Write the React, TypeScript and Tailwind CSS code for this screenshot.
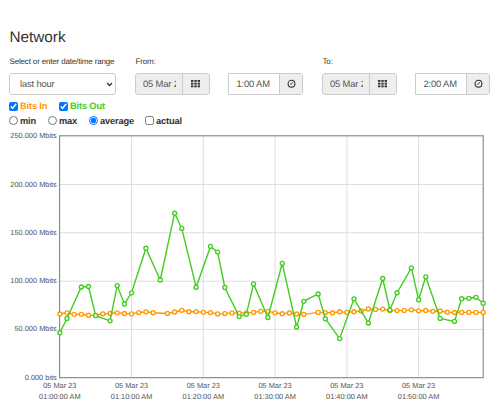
import { ReactNode } from "react"

type Point = [minute: number, y: number]

const bitsOut: Point[] = [
  [0, 332.7], [1, 318.5], [3, 287], [4, 286.5], [5, 315.6], [7, 320.8], [8, 285.6], [9, 304], [10, 292.8],
  [12, 248.2], [14, 280], [16, 213.2], [17, 228.4], [19, 287.2], [21, 246.4], [22, 252.1], [23, 287.5],
  [25, 316.6], [26, 314.3], [27, 283.9], [29, 317.5], [31, 263.3], [33, 327], [34, 301.3], [36, 294],
  [37, 318.7], [39, 338.6], [41, 298.8], [43, 323], [45, 278.5], [46, 310], [47, 292.7], [49, 267.8],
  [50, 299.7], [51, 276.8], [53, 318.4], [55, 321.4], [56, 298.7], [57, 298.3], [58, 297.3], [59, 303.2],
]

const bitsIn: Point[] = [
  [0, 314], [1, 312.8], [2, 314.3], [3, 314.3], [4, 315.2], [5, 315.5], [6, 313.8], [7, 313.5], [8, 312.8],
  [9, 313.5], [10, 313.8], [11, 312.6], [12, 311.8], [13, 312.7], [15, 313.5], [16, 312], [17, 310.3],
  [18, 311.7], [19, 311.6], [20, 312.3], [21, 312.6], [22, 313.9], [23, 313.6], [24, 312.9], [25, 313.2],
  [26, 312.8], [27, 312.4], [28, 311.3], [29, 311.4], [30, 312.8], [31, 313.7], [32, 313], [33, 314],
  [34, 314.4], [36, 312.4], [37, 312.6], [38, 312.7], [39, 311.7], [40, 312.4], [41, 311.7], [42, 311],
  [43, 309], [44, 309.4], [45, 309.1], [46, 310.5], [47, 310.6], [48, 310.4], [49, 309.8], [50, 310.8],
  [51, 310.5], [52, 311.3], [53, 311], [54, 312.2], [55, 312.5], [56, 312.4], [57, 312.4], [58, 312.4], [59, 312.4],
]

const yAxis = [
  { label: "250.000 Mbits", y: 136 },
  { label: "200.000 Mbits", y: 184.5 },
  { label: "150.000 Mbits", y: 232.8 },
  { label: "100.000 Mbits", y: 281.2 },
  { label: "50.000 Mbits", y: 329.4 },
  { label: "0.000 bits", y: 377.6 },
]

const xAxis = ["01:00:00 AM", "01:10:00 AM", "01:20:00 AM", "01:30:00 AM", "01:40:00 AM", "01:50:00 AM"]

const toX = (minute: number) => 59.8 + minute * 7.176

function Series({ points, color }: { points: Point[]; color: string }) {
  return (
    <g stroke={color}>
      <polyline points={points.map(([m, y]) => `${toX(m)},${y}`).join(" ")} fill="none" strokeWidth="1.4" />
      {points.map(([m, y]) => (
        <circle key={m} cx={toX(m)} cy={y} r="2" fill="#fff" strokeWidth="1.35" />
      ))}
    </g>
  )
}

function Chart() {
  return (
    <svg viewBox="0 128 500 275" className="block h-[275px] w-[500px]">
      <g stroke="#dedede" strokeWidth="1">
        {yAxis.slice(1, -1).map((tick) => (
          <line key={tick.label} x1="60" x2="483" y1={tick.y} y2={tick.y} />
        ))}
        {xAxis.slice(1).map((label, i) => (
          <line key={label} x1={toX((i + 1) * 10)} x2={toX((i + 1) * 10)} y1="136" y2="377" />
        ))}
      </g>
      <rect x="59.6" y="135.8" width="423.6" height="241.9" fill="none" stroke="#848484" strokeWidth="1.1" />
      <Series points={bitsIn} color="#ff9900" />
      <Series points={bitsOut} color="#44cc22" />
      <g fill="#545454" fontSize="7.4">
        {yAxis.map((tick) => (
          <text key={tick.label} x="56.8" y={tick.y + 2} textAnchor="end" textRendering="geometricPrecision">
            {tick.label}
          </text>
        ))}
        {xAxis.map((label, i) => (
          <g key={label} textAnchor="middle" textRendering="geometricPrecision">
            <text x={toX(i * 10)} y="388.4">05 Mar 23</text>
            <text x={toX(i * 10)} y="399.2">{label}</text>
          </g>
        ))}
      </g>
    </svg>
  )
}

function GridIcon() {
  return (
    <svg viewBox="0 0 9 8" className="h-2 w-[9px] fill-[#333]">
      {[0, 2.7, 5.4].map((y) =>
        [0, 3.3, 6.6].map((x) => <rect key={`${x}-${y}`} x={x} y={y} width="2.4" height="1.9" />)
      )}
    </svg>
  )
}

function ClockIcon() {
  return (
    <svg viewBox="0 0 9 9" className="mb-px h-[9px] w-[9px] fill-none stroke-[#333]">
      <circle cx="4.5" cy="4.7" r="3.4" strokeWidth="1.1" />
      <path d="M5.6 3.1 4.6 5.1H3" strokeWidth=".8" />
    </svg>
  )
}

function DateInput({ value }: { value: string }) {
  return (
    <div className="flex h-[22px] w-[75px] rounded-[3px] border border-[#ccc] bg-[#eee]">
      <div className="flex w-[47px] items-center border-r border-[#ccc] pl-[7px]">
        <span className="w-[32.5px] overflow-hidden pt-px whitespace-nowrap">{value}</span>
      </div>
      <div className="flex flex-1 items-center justify-center pr-px pb-px">
        <GridIcon />
      </div>
    </div>
  )
}

function TimeInput({ value }: { value: string }) {
  return (
    <div className="flex h-[22px] w-[75px] rounded-r-[3px] border border-[#ccc] bg-white">
      <div className="flex w-[51px] items-center border-r border-[#ccc] pt-px pl-[7.5px] whitespace-nowrap">{value}</div>
      <div className="flex flex-1 items-center justify-center rounded-r-[2px] bg-[#eee]">
        <ClockIcon />
      </div>
    </div>
  )
}

function Field({ label, className, children }: { label: string; className: string; children: ReactNode }) {
  return (
    <div className={className}>
      <div className="mb-[6px] h-[10px] pl-[0.5px] text-[8px] leading-[9px] tracking-[-0.16px] whitespace-nowrap text-[#333]">
        {label}
      </div>
      <div className="flex text-[9.4px] tracking-[-0.16px] text-[#555]">{children}</div>
    </div>
  )
}

export default function App() {
  return (
    <div className="h-[403px] w-[500px] overflow-hidden bg-white font-['Liberation_Sans',Arial,sans-serif] text-[#333] [text-rendering:geometricPrecision]">
      <div className="h-[128px] pt-[28px] pl-[9px]">
        <h1 className="h-[19px] pl-[0.5px] text-[15.3px] leading-[19px] text-[#333]">Network</h1>

        <div className="mt-[10px] flex">
          <Field label="Select or enter date/time range" className="w-[126px]">
            <div className="flex h-[22px] w-[107px] items-center justify-between rounded-[3px] border border-[#ccc] pr-[2px] pl-[10px]">
              <span className="pt-px">last hour</span>
              <svg viewBox="0 0 7 5" className="h-[5px] w-[7px] fill-none stroke-[#333]">
                <path d="M1 1 3.5 3.5 6 1" strokeWidth="1.3" />
              </svg>
            </div>
          </Field>
          <Field label="From:" className="w-[187px]">
            <DateInput value="05 Mar 23" />
            <div className="w-[18px]" />
            <TimeInput value="1:00 AM" />
          </Field>
          <Field label="To:" className="w-[170px]">
            <DateInput value="05 Mar 23" />
            <div className="w-[18px]" />
            <TimeInput value="2:00 AM" />
          </Field>
        </div>

        <div className="mt-[6px] flex h-[11px] items-center text-[9.3px] leading-[11px] font-bold tracking-[-0.16px]">
          <label className="flex w-[50px] items-center gap-[2px] whitespace-nowrap text-[#ff9900]">
            <input type="checkbox" defaultChecked className="h-[9px] w-[9px]" />
            Bits In
          </label>
          <label className="flex items-center gap-[2px] whitespace-nowrap text-[#44cc22]">
            <input type="checkbox" defaultChecked className="h-[9px] w-[9px]" />
            Bits Out
          </label>
        </div>

        <div className="mt-[4px] flex h-[11px] items-center text-[9.3px] leading-[11px] font-bold tracking-[-0.16px]">
          <label className="flex w-[39px] items-center gap-[2px]">
            <input type="radio" name="mode" className="mb-[3px] h-[9px] w-[9px]" />
            min
          </label>
          <label className="flex w-[41px] items-center gap-[2px]">
            <input type="radio" name="mode" className="mb-[3px] h-[9px] w-[9px]" />
            max
          </label>
          <label className="flex w-[56px] items-center gap-[2px]">
            <input type="radio" name="mode" defaultChecked className="mb-[3px] h-[9px] w-[9px]" />
            average
          </label>
          <label className="flex items-center gap-[2px]">
            <input type="checkbox" className="mb-[3px] h-[9px] w-[9px]" />
            actual
          </label>
        </div>
      </div>
      <Chart />
    </div>
  )
}
